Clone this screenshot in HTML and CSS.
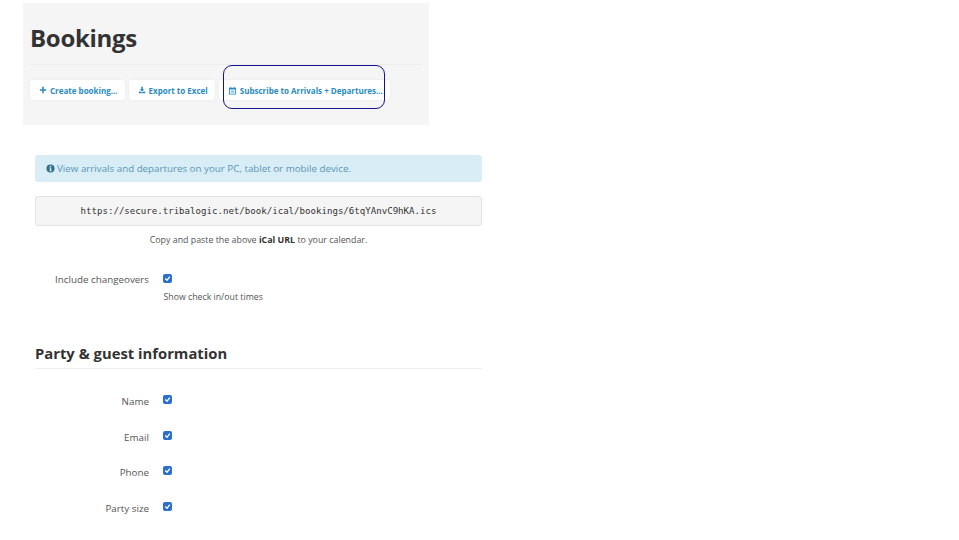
FILE: index.html
```html
<!DOCTYPE html>
<html lang="en">
<head>
  <meta charset="UTF-8">
  <title>Bookings</title>
  <link rel="stylesheet" href="styles.css">
</head>
<body>

  <div class="header-panel">
    <h1>Bookings</h1>
    <div class="toolbar">
      <a class="btn">
        <svg class="icon" viewBox="0 0 10 10"><path d="M4 1h2v3h3v2H6v3H4V6H1V4h3z"/></svg>
        Create booking...
      </a>
      <a class="btn">
        <svg class="icon" viewBox="0 0 10 10"><path d="M4 1h2v3h2L5 7 2 4h2zM1 7h2l2 1 2-1h2v2H1z"/></svg>
        Export to Excel
      </a>
      <a class="btn btn-subscribe">
        <svg class="icon" viewBox="0 0 10 10"><path fill-rule="evenodd" d="M1 2h1.500V1h1v1h3V1h1v1H9v7.500H1zM2 4v4.500h6V4z"/><path d="M3 5h4v2.500H3z" opacity=".5"/></svg>
        Subscribe to Arrivals + Departures...
      </a>
      <div class="callout"></div>
    </div>
  </div>

  <div class="content">
    <div class="alert">
      <svg class="info-icon" viewBox="0 0 10 10"><path fill-rule="evenodd" d="M5 .5a4.500 4.500 0 1 0 0 9 4.500 4.500 0 0 0 0-9zM4.300 2h1.400v1.300H4.300zM3.800 4h2v3h.5v1H3.800V7h.6V5h-.6z"/></svg>
      View arrivals and departures on your PC, tablet or mobile device.
    </div>

    <div class="url-box">https://secure.tribalogic.net/book/ical/bookings/6tqYAnvC9hKA.ics</div>
    <p class="url-help">Copy and paste the above <strong>iCal URL</strong> to your calendar.</p>

    <div class="form-row form-row-first">
      <label class="form-label">Include changeovers</label>
      <div class="form-field">
        <span class="check"><svg viewBox="0 0 10 10"><path d="M2.500 5l2 2 3-4"/></svg></span>
        <div class="field-help">Show check in/out times</div>
      </div>
    </div>

    <h2>Party &amp; guest information</h2>

    <div class="form-row">
      <label class="form-label">Name</label>
      <div class="form-field"><span class="check"><svg viewBox="0 0 10 10"><path d="M2.500 5l2 2 3-4"/></svg></span></div>
    </div>
    <div class="form-row">
      <label class="form-label">Email</label>
      <div class="form-field"><span class="check"><svg viewBox="0 0 10 10"><path d="M2.500 5l2 2 3-4"/></svg></span></div>
    </div>
    <div class="form-row">
      <label class="form-label">Phone</label>
      <div class="form-field"><span class="check"><svg viewBox="0 0 10 10"><path d="M2.500 5l2 2 3-4"/></svg></span></div>
    </div>
    <div class="form-row">
      <label class="form-label">Party size</label>
      <div class="form-field"><span class="check"><svg viewBox="0 0 10 10"><path d="M2.500 5l2 2 3-4"/></svg></span></div>
    </div>
  </div>

</body>
</html>
```

FILE: styles.css
```css
body {
  font-family: 'Open Sans', 'Liberation Sans', sans-serif;
  background-color: #fff;
  color: #555;
  margin: 0;
  padding: 3px 0 0 23px;
  font-size: 10px;
}

.header-panel {
  background-color: #f5f5f5;
  width: 406px;
  height: 122px;
  padding-left: 7px;
  box-sizing: border-box;
}

h1 {
  font-size: 24px;
  line-height: 36px;
  font-weight: 700;
  letter-spacing: -0.3px;
  color: #333;
  margin: 0;
  padding: 17px 0 8px;
  border-bottom: 1px solid #eee;
  margin-right: 7px;
}

.toolbar {
  display: flex;
  gap: 4px;
  margin-top: 15px;
  position: relative;
}

.btn {
  display: flex;
  align-items: center;
  gap: 3px;
  height: 20px;
  padding: 0 7px 0 9px;
  background-color: #fff;
  border-radius: 3px;
  box-shadow: 0 0 2px rgba(0, 0, 0, 0.08);
  color: #2a8bc0;
  font-size: 8px;
  font-weight: 700;
  white-space: nowrap;
}

.icon {
  width: 8px;
  height: 8px;
  fill: #2a8bc0;
}

.btn-subscribe {
  padding-left: 9px;
}

.btn-subscribe .icon {
  width: 9px;
  height: 9px;
}

.callout {
  position: absolute;
  left: 193px;
  top: -15px;
  width: 160px;
  height: 42px;
  border: 1px solid #14148c;
  border-radius: 9px;
}

.content {
  width: 447px;
  margin: 30px 0 0 12px;
}

.alert {
  display: flex;
  align-items: center;
  gap: 2px;
  height: 27px;
  padding-left: 11px;
  background-color: #d9edf7;
  border-radius: 3px;
  color: #5a97b3;
  font-size: 9.770px;
}

.info-icon {
  width: 9px;
  height: 9px;
  fill: #31708f;
}

.url-box {
  height: 30px;
  line-height: 28px;
  margin-top: 14px;
  box-sizing: border-box;
  background-color: #f5f5f5;
  border: 1px solid #e3e3e3;
  border-radius: 3px;
  text-align: center;
  font-family: 'DejaVu Sans Mono', 'Liberation Mono', monospace;
  font-size: 9.100px;
  color: #333;
}

.url-help {
  margin: 7px 0 0;
  line-height: 14px;
  text-align: center;
  font-size: 8.850px;
}

.url-help strong {
  color: #333;
}

.form-row {
  display: flex;
  gap: 14px;
  height: 35.700px;
}

.form-row-first {
  height: 49px;
  margin-top: 21px;
}

.form-label {
  width: 114px;
  text-align: right;
  font-size: 9.800px;
  line-height: 14px;
  padding-top: 6px;
}

.form-row-first .form-label {
  padding-top: 5px;
}

.check {
  display: block;
  width: 9px;
  height: 9px;
  margin-top: 6px;
  background-color: #2a6fd0;
  border-radius: 2px;
}

.check svg {
  display: block;
  fill: none;
  stroke: #fff;
  stroke-width: 1.500;
}

.field-help {
  font-size: 8.750px;
  line-height: 12px;
  margin-top: 7.500px;
  margin-left: 0.500px;
}

h2 {
  font-size: 14.800px;
  line-height: 20px;
  font-weight: 700;
  color: #333;
  margin: 26px 0 20px;
  padding-bottom: 5px;
  border-bottom: 1px solid #eee;
}
```
